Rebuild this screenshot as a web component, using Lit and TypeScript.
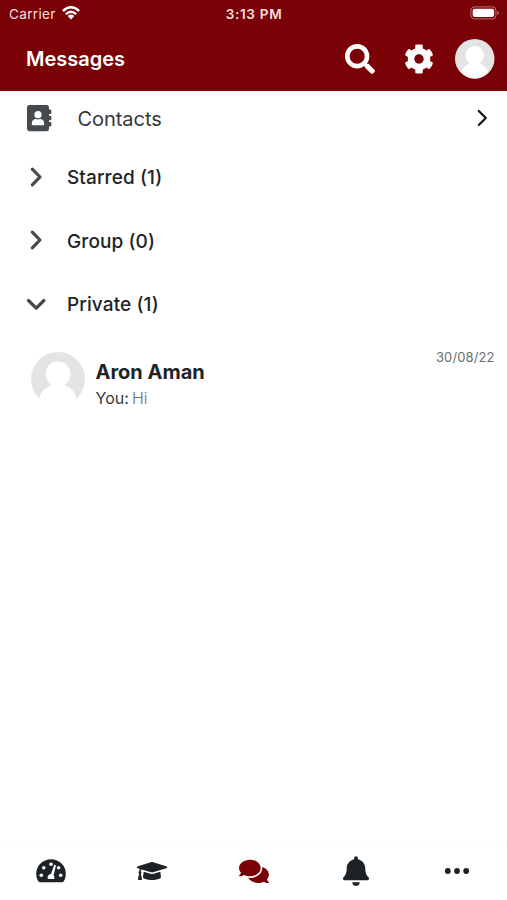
import { LitElement, html, css, svg } from "lit";
import { customElement } from "lit/decorators.js";

const person = (bg: string) => svg`
  <circle cx="27" cy="27" r="27" fill=${bg}></circle>
  <path fill="#fff" d="M27 9.500c-7.200 0-12.300 5.300-12.300 12.300 0 5 2 8.400 5 10.700v1.300c-5.500 2-9.600 6-11.200 11.200Q16 54 27 54T45.500 45c-1.600-5.200-5.700-9.200-11.200-11.200v-1.300c3-2.300 5-5.700 5-10.700 0-7-5.100-12.300-12.300-12.300z"></path>`;

@customElement("app-root")
export class AppRoot extends LitElement {
  static styles = css`
    :host {
      display: flex;
      flex-direction: column;
      width: 507px;
      height: 900px;
      overflow: hidden;
      background: #fff;
      color: #202426;
      font-family: Inter, "Liberation Sans", sans-serif;
      white-space: nowrap;
    }
    svg { display: block; flex: none; overflow: visible; }
    .top { background: #7a0206; color: #fff; height: 91px; flex: none; }
    .status {
      display: grid;
      grid-template-columns: 1fr auto 1fr;
      align-items: center;
      height: 27px;
      padding: 0 8px 0 9px;
      font-size: 13px;
      color: #f8dfdf;
    }
    .carrier { display: flex; align-items: center; gap: 6px; font-size: 13.500px; letter-spacing: 0.35px; }
    .carrier svg { margin-top: -1px; }
    .time { font-size: 13.500px; font-weight: 600; letter-spacing: 0.7px; }
    .battery { justify-self: end; margin-top: -1px; }
    .bar { display: flex; align-items: center; height: 63px; padding: 0 12.500px 0 26px; }
    .title { flex: 1; margin: 0; font-size: 20px; font-weight: 600; }
    .actions { display: flex; align-items: center; }
    .cog { margin: 0 21.500px 0 29px; }
    .contacts { display: flex; align-items: center; height: 54px; padding: 1px 19px 0 26px; color: #34383b; box-sizing: border-box; }
    .contacts .label { flex: 1; margin-left: 25.500px; font-size: 20px; letter-spacing: -0.05px; }
    .book { margin-top: -1.500px; }
    .arrow { margin-top: -1px; }
    .section { display: flex; align-items: center; height: 63.500px; padding-left: 26px; }
    .section .label { margin: 2px 0 0 21px; font-size: 19px; font-weight: 500; letter-spacing: 0.1px; }
    .chat { display: flex; padding: 16px 12.500px 0 31px; }
    .who { flex: 1; margin: 8.500px 0 0 10.500px; }
    .name { font-size: 20px; font-weight: 700; line-height: 25px; }
    .msg { font-size: 16px; line-height: 24px; margin-top: 0.5px; color: #34383b; word-spacing: -1.300px; }
    .msg span { color: #6a6f73; font-weight: 300; }
    .date { font-size: 13px; line-height: 16px; color: #6a6f73; margin-top: -3px; letter-spacing: 0.1px; }
    .fill { flex: 1; }
    .tabs {
      display: grid;
      grid-template-columns: repeat(5, 1fr);
      align-items: center;
      justify-items: center;
      height: 59px;
      margin-right: -1px;
      flex: none;
      border-top: 1px solid #fafafa;
      box-sizing: border-box;
      color: #1c2226;
    }
    .active { color: #7a0206; }
  `;

  private section(label: string, open: boolean) {
    return html`<div class="section">
      <svg width="20" height="20" fill="none" stroke="#454a4e" stroke-width="3.200" stroke-linecap="round" stroke-linejoin="round">
        <path d=${open ? "M2.500 6.500L10.200 14.200L17.900 6.500" : "M6.300 2.200L14 10L6.300 17.800"}></path>
      </svg>
      <span class="label">${label}</span>
    </div>`;
  }

  render() {
    return html`
      <header class="top">
        <div class="status">
          <div class="carrier">
            <span>Carrier</span>
            <svg width="18" height="14" fill="none" stroke="#fff" stroke-width="2.400">
              <path d="M.9 5Q9-2.600 17.100 5"></path>
              <path d="M3.900 8.100Q9 3.400 14.100 8.100"></path>
              <path stroke="none" fill="#fff" d="M5.700 10Q9 7.200 12.300 10L9 13.500z"></path>
            </svg>
          </div>
          <div class="time">3:13 PM</div>
          <svg class="battery" width="29" height="14">
            <rect x=".9" y=".9" width="25" height="12" rx="3.500" fill="none" stroke="#b77173"></rect>
            <rect x="2.700" y="2.700" width="21.400" height="8.400" rx="2" fill="#fff"></rect>
            <path d="M27.200 5v4q1.600-.6 1.600-2t-1.600-2z" fill="#b77173"></path>
          </svg>
        </div>
        <div class="bar">
          <h1 class="title">Messages</h1>
          <div class="actions">
            <svg width="30" height="30" viewBox="0 0 512 512" fill="#fff">
              <path d="M505 442.7L405.3 343c-4.5-4.5-10.6-7-17-7H372c27.6-35.3 44-79.7 44-128C416 93.1 322.9 0 208 0S0 93.1 0 208s93.1 208 208 208c48.3 0 92.7-16.4 128-44v16.3c0 6.400 2.500 12.500 7 17l99.700 99.700c9.400 9.400 24.600 9.400 33.900 0l28.300-28.300c9.400-9.400 9.400-24.600.1-34zM208 336c-70.700 0-128-57.200-128-128 0-70.700 57.200-128 128-128 70.700 0 128 57.200 128 128 0 70.700-57.200 128-128 128z"></path>
            </svg>
            <svg class="cog" width="30" height="30" viewBox="0 0 512 512" fill="#fff">
              <path d="M487.4 315.7l-42.6-24.6c4.3-23.2 4.3-47 0-70.2l42.6-24.6c4.9-2.8 7.1-8.6 5.5-14-11.1-35.6-30-67.8-54.7-94.6-3.8-4.1-10-5.1-14.8-2.3L380.8 110c-17.9-15.4-38.5-27.3-60.8-35.1V25.8c0-5.6-3.9-10.5-9.4-11.7-36.7-8.2-74.3-7.8-109.2 0-5.5 1.2-9.4 6.1-9.4 11.7V75c-22.2 7.9-42.8 19.8-60.8 35.1L88.7 85.5c-4.9-2.8-11-1.9-14.8 2.3-24.7 26.7-43.6 58.9-54.7 94.6-1.7 5.4.6 11.2 5.5 14L67.3 221c-4.3 23.2-4.3 47 0 70.2l-42.6 24.6c-4.9 2.8-7.1 8.6-5.5 14 11.1 35.6 30 67.8 54.7 94.6 3.8 4.1 10 5.1 14.8 2.3l42.6-24.6c17.9 15.4 38.5 27.3 60.8 35.1v49.2c0 5.6 3.9 10.5 9.4 11.7 36.7 8.2 74.3 7.8 109.2 0 5.5-1.2 9.4-6.1 9.4-11.7v-49.2c22.2-7.9 42.8-19.8 60.8-35.1l42.6 24.6c4.9 2.8 11 1.9 14.8-2.3 24.7-26.7 43.6-58.9 54.7-94.6 1.5-5.5-.7-11.3-5.6-14.1zM256 336c-44.1 0-80-35.9-80-80s35.9-80 80-80 80 35.9 80 80-35.9 80-80 80z"></path>
            </svg>
            <svg width="39.500" height="39.500" viewBox="0 0 54 54">${person("#e4e4e5")}</svg>
          </div>
        </div>
      </header>

      <div class="contacts">
        <svg class="book" width="26" height="28">
          <path fill="#454a4e" d="M3.500 1h17Q23 1 23 3.500V5.500h1.500q.8 0 .8.8v3q0 .8-.8.8H23v1.600h1.500q.8 0 .8.8v3q0 .8-.8.8H23v1.600h1.500q.8 0 .8.8v3q0 .8-.8.8H23v2.300q0 2.500-2.500 2.500h-17Q1 27 1 24.500v-21Q1 1 3.500 1z"></path>
          <circle cx="12" cy="10.700" r="3.600" fill="#fff"></circle>
          <path fill="#fff" d="M5.800 20.500v-1.300c0-2.400 1.800-4.200 4.200-4.200q2 .8 4 0c2.400 0 4.200 1.800 4.200 4.200v1.300q0 .8-.9.8H6.700q-.9 0-.9-.8z"></path>
        </svg>
        <span class="label">Contacts</span>
        <svg class="arrow" width="10" height="16" fill="none" stroke="#111" stroke-width="2.200" stroke-linecap="round" stroke-linejoin="round"><path d="M.8 1L7.800 8L.8 15"></path></svg>
      </div>

      <div class="sections">
        ${this.section("Starred (1)", false)}
        ${this.section("Group (0)", false)}
        ${this.section("Private (1)", true)}
      </div>

      <div class="chat">
        <svg width="54" height="54">${person("#e4e4e5")}
          <path fill="#fff" d="M0 46.500h54V55H0z"></path>
        </svg>
        <div class="who">
          <div class="name">Aron Aman</div>
          <div class="msg">You: <span>Hi</span></div>
        </div>
        <div class="date">30/08/22</div>
      </div>

      <div class="fill"></div>

      <nav class="tabs">
        <svg width="30" height="24">
          <path fill="currentColor" d="M15 .3C6.700 .3 .2 6.800 .2 14.700c0 2.700.7 5.200 1.900 7.400.5.800 1 1.200 1.900 1.200h22c.9 0 1.400-.4 1.900-1.200 1.200-2.200 1.900-4.700 1.900-7.400C29.800 6.800 23.300.3 15 .3z"></path>
          <g fill="#fff"><circle cx="5.300" cy="16.300" r="1.800"></circle><circle cx="7.800" cy="8.800" r="1.800"></circle><circle cx="15" cy="5.200" r="1.800"></circle><circle cx="22.600" cy="8.800" r="1.800"></circle><circle cx="24.700" cy="16.300" r="1.800"></circle>
          <path d="M18.200 5.800q1.800-.1 1.700 1.300l-2.300 9q1 1.100.7 3.900h-6.500c-.7-2.700.7-4.700 3.200-5z"></path></g>
        </svg>
        <svg width="30" height="24" viewBox="0 0 640 512" fill="currentColor">
          <path d="M622.34 153.2L343.4 67.5c-15.2-4.67-31.6-4.67-46.79 0L17.66 153.2c-23.54 7.23-23.54 38.36 0 45.59l48.63 14.94c-10.67 13.19-17.23 29.28-17.88 46.9C38.78 266.15 32 276.11 32 288c0 10.78 5.68 19.85 13.86 25.65L20.33 428.53C18.11 438.52 25.71 448 35.94 448h56.11c10.24 0 17.84-9.48 15.62-19.47L82.14 313.65C90.32 307.85 96 298.78 96 288c0-11.57-6.47-21.25-15.66-26.87.76-15.02 8.44-28.3 20.69-36.72L296.6 284.5c9.06 2.78 26.44 6.25 46.79 0l278.95-85.7c23.55-7.24 23.55-38.36 0-45.6zM352.79 315.09c-28.53 8.76-52.84 3.92-65.59 0l-145.02-44.55L128 384c0 35.35 85.96 64 192 64s192-28.65 192-64l-14.18-113.47-145.03 44.56z"></path>
        </svg>
        <svg class="active" width="30" height="26.600" viewBox="0 0 576 512" fill="currentColor">
          <path d="M416 192c0-88.4-93.1-160-208-160S0 103.6 0 192c0 34.3 14.1 65.9 38 92-13.4 30.2-35.5 54.2-35.8 54.5-2.2 2.3-2.8 5.7-1.5 8.7S4.8 352 8 352c36.6 0 66.9-12.3 88.7-25 32.2 15.7 70.3 25 111.3 25 114.9 0 208-71.6 208-160zm122 220c23.9-26 38-57.7 38-92 0-66.9-53.5-124.2-129.3-148.1.9 6.6 1.3 13.3 1.3 20.1 0 105.9-107.7 192-240 192-10.8 0-21.3-.8-31.7-1.9C207.8 439.6 281.8 480 368 480c41 0 79.1-9.2 111.3-25 21.8 12.7 52.1 25 88.7 25 3.2 0 6.1-1.9 7.3-4.8 1.3-2.9.7-6.3-1.5-8.7-.3-.2-22.4-24.2-35.8-54.5z"></path>
        </svg>
        <svg width="26" height="30" viewBox="0 0 448 512" fill="currentColor">
          <path d="M224 512c35.320 0 63.970-28.650 63.970-64H160.030c0 35.350 28.650 64 63.970 64zm215.390-149.710c-19.320-20.760-55.470-51.990-55.470-154.290 0-77.700-54.480-139.900-127.940-155.160V32c0-17.670-14.320-32-31.980-32s-31.980 14.330-31.980 32v20.840C118.560 68.100 64.080 130.300 64.080 208c0 102.300-36.150 133.530-55.470 154.290-6 6.450-8.660 14.160-8.610 21.710.110 16.400 12.980 32 32.100 32h383.800c19.120 0 32-15.600 32.100-32 .050-7.550-2.610-15.270-8.610-21.710z"></path>
        </svg>
        <svg width="26" height="8" fill="currentColor"><circle cx="3.800" cy="4" r="2.900"></circle><circle cx="13" cy="4" r="2.900"></circle><circle cx="22.200" cy="4" r="2.900"></circle></svg>
      </nav>
    `;
  }
}
